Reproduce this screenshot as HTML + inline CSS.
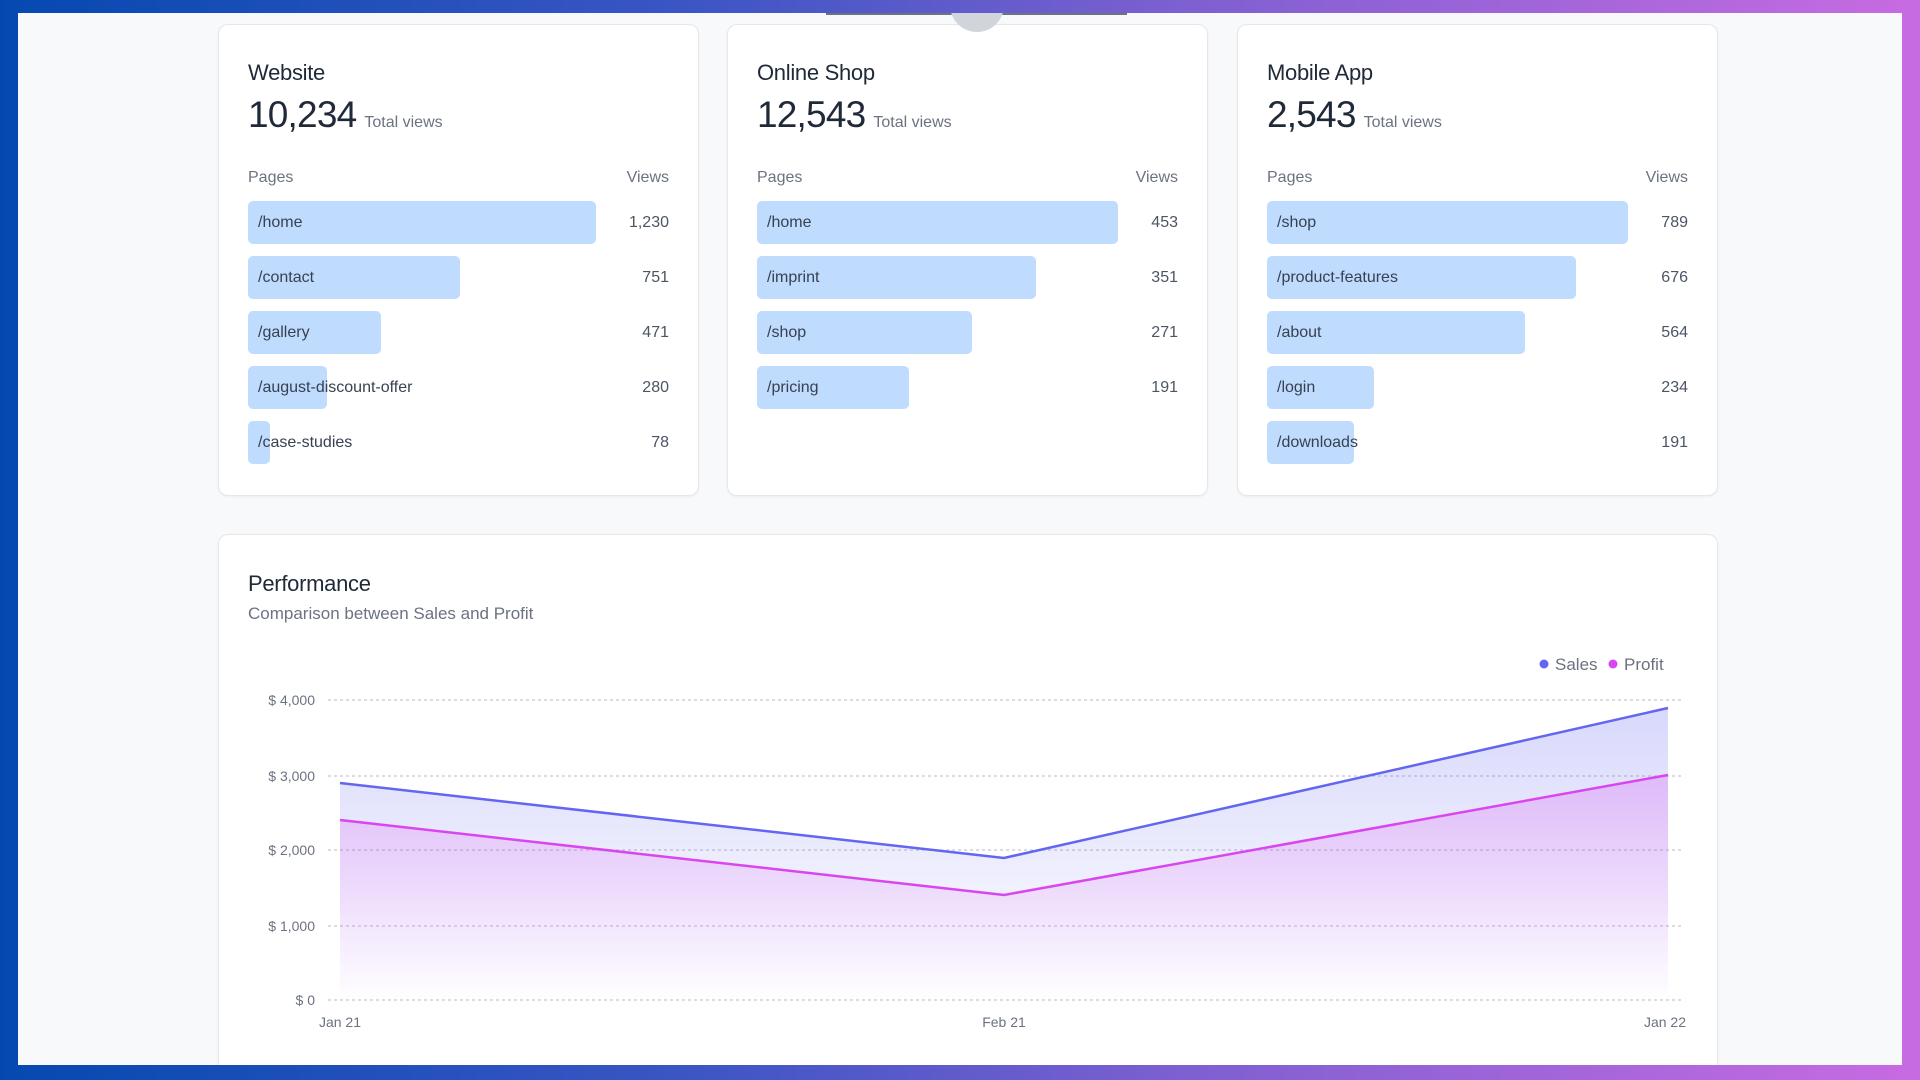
<!DOCTYPE html>
<html><head><meta charset="utf-8"><style>
*{box-sizing:border-box;margin:0;padding:0}
body{width:1920px;height:1080px;overflow:hidden;font-family:"Liberation Sans",sans-serif;color:#374151;background:linear-gradient(90deg,#0549b0 0%,#3a55c4 35%,#7a5fd0 60%,#c86be2 100%);position:relative}
.inner{position:absolute;left:18px;top:13px;width:1884px;height:1052px;background:#f8f9fb;overflow:hidden}
.card{position:absolute;background:#fff;border:1px solid #e5e7eb;border-radius:10px;box-shadow:0 1px 2px rgba(0,0,0,.05)}
.t{position:absolute;left:29px;top:35px;font-size:22px;color:#1f2937;letter-spacing:-.3px}
.num{position:absolute;left:29px;top:69px;font-size:37px;color:#1f2937;letter-spacing:-.8px}
.num span{font-size:16px;color:#6b7280;margin-left:8px;letter-spacing:0}
.hd{position:absolute;top:144px;font-size:16px;color:#6b7280}
.bar{position:absolute;left:29px;height:43px;background:#bfdbfe;border-radius:5px}
.lbl{position:absolute;left:39px;font-size:16px;color:#374151;line-height:43px}
.v{position:absolute;right:29px;font-size:16px;color:#4b5563;line-height:43px}
</style></head><body>
<div class="inner">
<div style="position:absolute;left:808px;top:0;width:301px;height:2px;background:#6b7280;z-index:2"></div>
<div style="position:absolute;left:932px;top:-35px;width:54px;height:54px;border-radius:50%;background:#d1d5db;z-index:3"></div>

<div class="card" style="left:200px;top:11px;width:481px;height:472px">
<div class="t">Website</div><div class="num">10,234<span>Total views</span></div>
<div class="hd" style="left:29px">Pages</div><div class="hd" style="right:29px">Views</div>
<div class="bar" style="top:176px;width:348px"></div><div class="lbl" style="top:176px">/home</div><div class="v" style="top:176px">1,230</div>
<div class="bar" style="top:231px;width:212px"></div><div class="lbl" style="top:231px">/contact</div><div class="v" style="top:231px">751</div>
<div class="bar" style="top:286px;width:133px"></div><div class="lbl" style="top:286px">/gallery</div><div class="v" style="top:286px">471</div>
<div class="bar" style="top:341px;width:79px"></div><div class="lbl" style="top:341px">/august-discount-offer</div><div class="v" style="top:341px">280</div>
<div class="bar" style="top:396px;width:22px"></div><div class="lbl" style="top:396px">/case-studies</div><div class="v" style="top:396px">78</div>
</div>

<div class="card" style="left:709px;top:11px;width:481px;height:472px">
<div class="t">Online Shop</div><div class="num">12,543<span>Total views</span></div>
<div class="hd" style="left:29px">Pages</div><div class="hd" style="right:29px">Views</div>
<div class="bar" style="top:176px;width:361px"></div><div class="lbl" style="top:176px">/home</div><div class="v" style="top:176px">453</div>
<div class="bar" style="top:231px;width:279px"></div><div class="lbl" style="top:231px">/imprint</div><div class="v" style="top:231px">351</div>
<div class="bar" style="top:286px;width:215px"></div><div class="lbl" style="top:286px">/shop</div><div class="v" style="top:286px">271</div>
<div class="bar" style="top:341px;width:152px"></div><div class="lbl" style="top:341px">/pricing</div><div class="v" style="top:341px">191</div>
</div>

<div class="card" style="left:1219px;top:11px;width:481px;height:472px">
<div class="t">Mobile App</div><div class="num">2,543<span>Total views</span></div>
<div class="hd" style="left:29px">Pages</div><div class="hd" style="right:29px">Views</div>
<div class="bar" style="top:176px;width:361px"></div><div class="lbl" style="top:176px">/shop</div><div class="v" style="top:176px">789</div>
<div class="bar" style="top:231px;width:309px"></div><div class="lbl" style="top:231px">/product-features</div><div class="v" style="top:231px">676</div>
<div class="bar" style="top:286px;width:258px"></div><div class="lbl" style="top:286px">/about</div><div class="v" style="top:286px">564</div>
<div class="bar" style="top:341px;width:107px"></div><div class="lbl" style="top:341px">/login</div><div class="v" style="top:341px">234</div>
<div class="bar" style="top:396px;width:87px"></div><div class="lbl" style="top:396px">/downloads</div><div class="v" style="top:396px">191</div>
</div>

<div class="card" style="left:200px;top:521px;width:1500px;height:600px">
<div class="t" style="top:36px">Performance</div>
<div style="position:absolute;left:29px;top:69px;font-size:17px;color:#6b7280">Comparison between Sales and Profit</div>
</div>
<svg style="position:absolute;left:0;top:0" width="1884" height="1052" viewBox="18 13 1884 1052">
<defs>
<linearGradient id="gs" x1="0" y1="0" x2="0" y2="1"><stop offset="0" stop-color="#6366f1" stop-opacity=".25"/><stop offset="1" stop-color="#6366f1" stop-opacity="0"/></linearGradient>
<linearGradient id="gp" x1="0" y1="0" x2="0" y2="1"><stop offset="0" stop-color="#d946ef" stop-opacity=".25"/><stop offset="1" stop-color="#d946ef" stop-opacity="0"/></linearGradient>
</defs>
<g stroke="#c4c7cc" stroke-width="1.3" stroke-dasharray="3 3">
<line x1="328" y1="700" x2="1682" y2="700"/><line x1="328" y1="776" x2="1682" y2="776"/><line x1="328" y1="850" x2="1682" y2="850"/><line x1="328" y1="926" x2="1682" y2="926"/><line x1="328" y1="1000" x2="1682" y2="1000"/>
</g>
<g font-size="14" fill="#6b7280" text-anchor="end" font-family="Liberation Sans">
<text x="315" y="705">$ 4,000</text><text x="315" y="781">$ 3,000</text><text x="315" y="855">$ 2,000</text><text x="315" y="931">$ 1,000</text><text x="315" y="1005">$ 0</text>
</g>
<g font-size="14" fill="#6b7280" font-family="Liberation Sans" text-anchor="middle">
<text x="340" y="1027">Jan 21</text><text x="1004" y="1027">Feb 21</text><text x="1665" y="1027">Jan 22</text>
</g>
<polygon points="340,783 1004,858 1668,708 1668,1000 340,1000" fill="url(#gs)"/>
<polygon points="340,820 1004,895 1668,775 1668,1000 340,1000" fill="url(#gp)"/>
<polyline points="340,783 1004,858 1668,708" fill="none" stroke="#6366f1" stroke-width="2.5"/>
<polyline points="340,820 1004,895 1668,775" fill="none" stroke="#d946ef" stroke-width="2.5"/>
<circle cx="1544" cy="664" r="4.5" fill="#6366f1"/><text x="1555" y="670" font-size="17" fill="#6b7280" font-family="Liberation Sans">Sales</text>
<circle cx="1613" cy="664" r="4.5" fill="#d946ef"/><text x="1624" y="670" font-size="17" fill="#6b7280" font-family="Liberation Sans">Profit</text>
</svg>
</div>
</body></html>
